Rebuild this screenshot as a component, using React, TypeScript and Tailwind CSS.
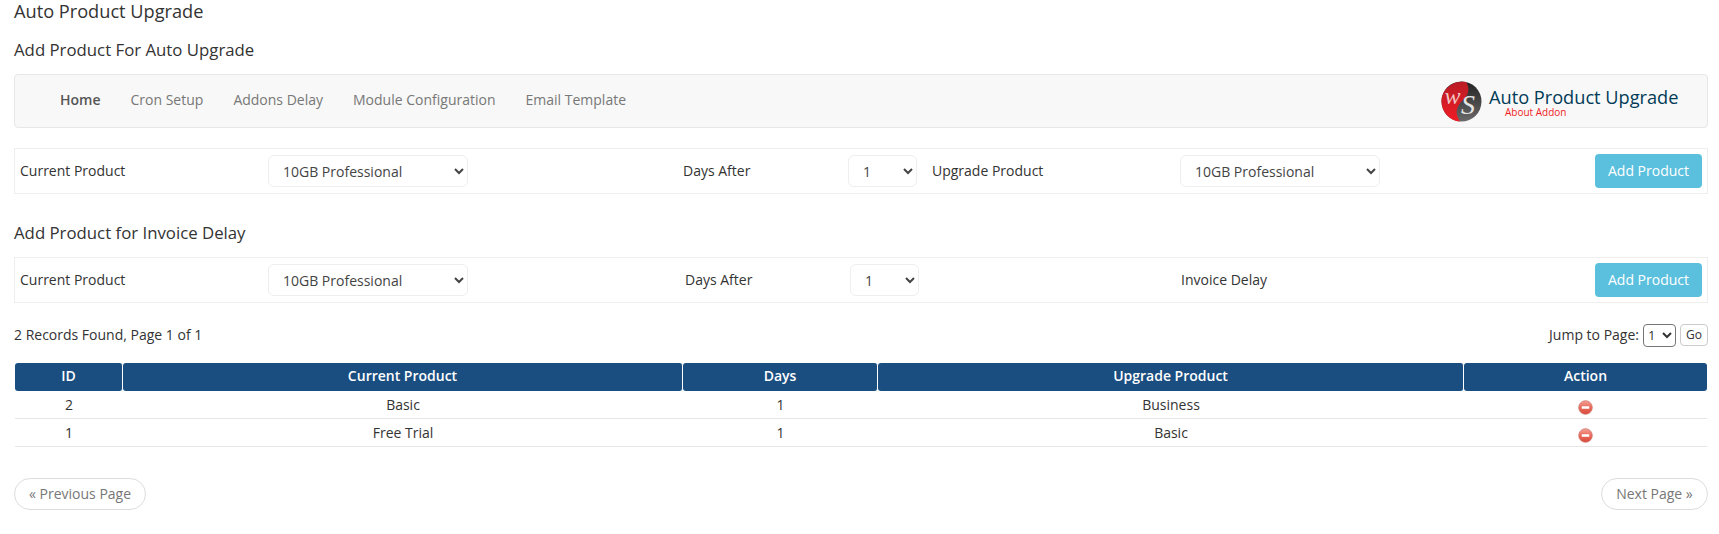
import React from "react";

function Minus() {
  return (
    <svg width="15" height="15" viewBox="0 0 15 15" className="relative top-[2px] inline-block">
      <defs>
        <linearGradient id="mg" x1="0" y1="0" x2="0" y2="1">
          <stop offset="0" stopColor="#f4a095" />
          <stop offset="0.5" stopColor="#e96a5c" />
          <stop offset="1" stopColor="#d64a3a" />
        </linearGradient>
      </defs>
      <circle cx="7.5" cy="7.5" r="6.8" fill="url(#mg)" stroke="#d0766c" strokeWidth="0.8" />
      <rect x="3.7" y="6.2" width="7.6" height="2.6" rx="0.6" fill="#fff" />
    </svg>
  );
}

function Logo() {
  return (
    <svg width="41" height="41" viewBox="0 0 41 41" className="shrink-0">
      <defs>
        <linearGradient id="lr" x1="0" y1="0" x2="0" y2="1">
          <stop offset="0" stopColor="#b91c26" />
          <stop offset="1" stopColor="#f01c24" />
        </linearGradient>
        <linearGradient id="ld" x1="0" y1="0" x2="0" y2="1">
          <stop offset="0" stopColor="#222" />
          <stop offset="1" stopColor="#6a6a6a" />
        </linearGradient>
      </defs>
      <circle cx="20.5" cy="20.5" r="20" fill="url(#ld)" />
      <path d="M25 1C20 .2 14 .6 9 4.5C3.5 8.5 .5 14 .5 20.5C.5 31 9 40 19 40.5C16.5 36 15 33 16 28.5C17.5 22 23 19 26 14C28 10 28 5 25 1Z" fill="url(#lr)" />
      <text x="3.5" y="23" fontFamily="'Liberation Serif', serif" fontStyle="italic" fontSize="24" fill="#f2c4c4">w</text>
      <text x="20" y="33" fontFamily="'Liberation Serif', serif" fontStyle="italic" fontSize="28" fill="#e4e4e4">S</text>
    </svg>
  );
}

function Sel({ label, w }: { label: string; w: string }) {
  return (
    <select className={`${w} h-8 rounded-md border border-[#eeeeee] bg-white pl-[10px] pr-1 text-sm text-[#444]`} defaultValue={label}>
      <option>{label}</option>
    </select>
  );
}

function AddBtn() {
  return (
    <button className="h-[34px] w-[107px] rounded bg-[#5bc0de] text-sm text-white">Add Product</button>
  );
}

const headers = ["ID", "Current Product", "Days", "Upgrade Product", "Action"];
const rows = [
  ["2", "Basic", "1", "Business"],
  ["1", "Free Trial", "1", "Basic"],
];

export default function App() {
  return (
    <div className="min-h-[534px] bg-white pl-[14px] pr-[11px] font-['Open_Sans','Noto_Sans',sans-serif] text-sm text-[#333]">
      <h1 className="text-[18.2px] leading-[22px] text-[#333]">Auto Product Upgrade</h1>
      <h2 className="mt-[17px] text-[16.8px] leading-[22px] text-[#333]">Add Product For Auto Upgrade</h2>

      <nav className="mt-[13px] flex h-[54px] items-center justify-between rounded border border-[#e7e7e7] bg-[#f8f8f8] pl-[45px] pr-[30px]">
        <ul className="mb-[2px] flex gap-[30px] text-[#777]">
          <li className="font-semibold text-[#555]">Home</li>
          <li>Cron Setup</li>
          <li>Addons Delay</li>
          <li>Module Configuration</li>
          <li>Email Template</li>
        </ul>
        <div className="flex items-center gap-[7px]">
          <Logo />
          <div className="mt-[2px] w-[188px] whitespace-nowrap">
            <div className="text-[18.2px] leading-[20px] text-[#003b57]">Auto Product Upgrade</div>
            <div className="pl-[16px] text-[10px] leading-[11px] text-[#f01c24]">About Addon</div>
          </div>
        </div>
      </nav>

      <div className="mt-5 grid h-[46px] grid-cols-[248px_415px_165px_84px_248px_1fr] items-center border border-[#eeeeee] pl-[5px] pr-[5px]">
        <span>Current Product</span>
        <Sel label="10GB Professional" w="w-[200px]" />
        <span>Days After</span>
        <Sel label="1" w="w-[69px]" />
        <span>Upgrade Product</span>
        <div className="flex items-center justify-between">
          <Sel label="10GB Professional" w="w-[200px]" />
          <AddBtn />
        </div>
      </div>

      <h2 className="mt-[28px] text-[16.8px] leading-[22px] text-[#333]">Add Product for Invoice Delay</h2>

      <div className="mt-[13px] grid h-[46px] grid-cols-[248px_417px_165px_331px_1fr] items-center border border-[#eeeeee] pl-[5px] pr-[5px]">
        <span>Current Product</span>
        <Sel label="10GB Professional" w="w-[200px]" />
        <span>Days After</span>
        <Sel label="1" w="w-[69px]" />
        <div className="flex items-center justify-between">
          <span>Invoice Delay</span>
          <AddBtn />
        </div>
      </div>

      <div className="mt-5 flex h-[24px] items-center justify-between text-sm">
        <span>2 Records Found, Page 1 of 1</span>
        <div className="flex items-center gap-1">
          <span>Jump to Page:</span>
          <select className="h-[23px] w-[33px] rounded-sm border border-[#767676] bg-white text-[13px]" defaultValue="1">
            <option>1</option>
          </select>
          <button className="h-[22px] w-[28px] rounded-sm border border-[#cccccc] bg-white text-xs text-[#333]">Go</button>
        </div>
      </div>

      <table className="mt-4 ml-[1px] w-[1692px] table-fixed border-separate border-spacing-0 text-center">
        <colgroup>
          <col className="w-[108px]" />
          <col className="w-[560px]" />
          <col className="w-[195px]" />
          <col className="w-[586px]" />
          <col />
        </colgroup>
        <thead>
          <tr>
            {headers.map((h, i) => (
              <th key={h} className={`h-[28px] rounded-[3px] bg-[#1a4d80] pb-[2px] font-semibold text-white ${i < 4 ? "border-r border-r-white" : ""}`}>
                {h}
              </th>
            ))}
          </tr>
        </thead>
        <tbody>
          {rows.map((r) => (
            <tr key={r[0]}>
              {r.map((c, i) => (
                <td key={i} className="h-[28px] border-b border-b-[#e6e6e6] text-sm">{c}</td>
              ))}
              <td className="h-[28px] border-b border-b-[#e6e6e6]"><Minus /></td>
            </tr>
          ))}
        </tbody>
      </table>

      <div className="mt-[31px] flex justify-between text-sm text-[#777]">
        <button className="h-[32px] w-[132px] rounded-2xl border border-[#dddddd] bg-white">« Previous Page</button>
        <button className="h-[32px] w-[107px] rounded-2xl border border-[#dddddd] bg-white">Next Page »</button>
      </div>
    </div>
  );
}
